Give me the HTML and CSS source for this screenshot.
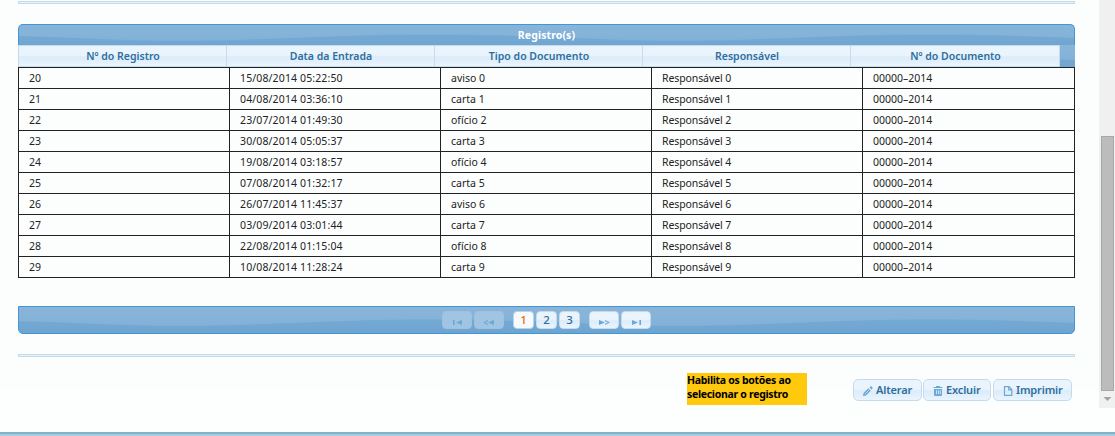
FILE: index.html
```
<!DOCTYPE html>
<html lang="pt-BR">
<head>
<meta charset="utf-8">
<title>Registros</title>
<link rel="stylesheet" href="styles.css">
</head>
<body>
<div class="viewport">
  <main class="content">
    <div class="separator"></div>
    <section class="grid">
      <div class="grid-title gloss"><span>Registro(s)</span></div>
      <div class="grid-head gloss">
        <div class="head-cell"><span>Nº do Registro</span></div>
        <div class="head-cell"><span>Data da Entrada</span></div>
        <div class="head-cell"><span>Tipo do Documento</span></div>
        <div class="head-cell"><span>Responsável</span></div>
        <div class="head-cell"><span>Nº do Documento</span></div>
      </div>
      <table class="grid-body">
        <colgroup><col class="col"><col class="col"><col class="col"><col class="col"><col></colgroup>
        <tbody>
          <tr><td>20</td><td class="date">15/08/2014 05:22:50</td><td>aviso 0</td><td class="name">Responsável 0</td><td>00000–2014</td></tr>
          <tr><td>21</td><td class="date">04/08/2014 03:36:10</td><td>carta 1</td><td class="name">Responsável 1</td><td>00000–2014</td></tr>
          <tr><td>22</td><td class="date">23/07/2014 01:49:30</td><td>ofício 2</td><td class="name">Responsável 2</td><td>00000–2014</td></tr>
          <tr><td>23</td><td class="date">30/08/2014 05:05:37</td><td>carta 3</td><td class="name">Responsável 3</td><td>00000–2014</td></tr>
          <tr><td>24</td><td class="date">19/08/2014 03:18:57</td><td>ofício 4</td><td class="name">Responsável 4</td><td>00000–2014</td></tr>
          <tr><td>25</td><td class="date">07/08/2014 01:32:17</td><td>carta 5</td><td class="name">Responsável 5</td><td>00000–2014</td></tr>
          <tr><td>26</td><td class="date">26/07/2014 11:45:37</td><td>aviso 6</td><td class="name">Responsável 6</td><td>00000–2014</td></tr>
          <tr><td>27</td><td class="date">03/09/2014 03:01:44</td><td>carta 7</td><td class="name">Responsável 7</td><td>00000–2014</td></tr>
          <tr><td>28</td><td class="date">22/08/2014 01:15:04</td><td>ofício 8</td><td class="name">Responsável 8</td><td>00000–2014</td></tr>
          <tr><td>29</td><td class="date">10/08/2014 11:28:24</td><td>carta 9</td><td class="name">Responsável 9</td><td>00000–2014</td></tr>
        </tbody>
      </table>
    </section>
    <nav class="pager gloss">
      <a class="page-btn nav-btn disabled"><svg width="28" height="16" viewBox="0 0 28 16"><path d="M10 8h1.600v5H10zM19 8v5l-6-2.500z"/></svg></a>
      <a class="page-btn nav-btn disabled"><svg width="28" height="16" viewBox="0 0 28 16"><path d="M19 8v5l-6-2.500zM13 8v1.300L10 10.500l3 1.200V13l-5-2.500z"/></svg></a>
      <span class="pages">
        <a class="page-btn active">1</a>
        <a class="page-btn">2</a>
        <a class="page-btn">3</a>
      </span>
      <a class="page-btn nav-btn"><svg width="28" height="16" viewBox="0 0 28 16"><path d="M9 8v5l6-2.500zM15 8l5 2.500-5 2.500v-1.300l3-1.200-3-1.200z"/></svg></a>
      <a class="page-btn nav-btn"><svg width="28" height="16" viewBox="0 0 28 16"><path d="M10 8v5l6-2.500zM17.400 8H19v5h-1.600z"/></svg></a>
    </nav>
    <div class="separator"></div>
    <footer class="actions">
      <p class="note">Habilita os botões ao<br>selecionar o registro</p>
      <div class="buttons">
        <button class="btn alter"><svg width="10" height="10" viewBox="0 0 10 10"><path d="M0 10l.6-3L5.300 2.300l2.400 2.400L3 9.400z"/><path d="M2 8l4-4" stroke="#e4f0fb" stroke-width=".7"/><path d="M6.500 1.600L8 .1 9.900 2 8.400 3.500z"/></svg><span>Alterar</span></button>
        <button class="btn exclude"><svg width="10" height="10" viewBox="0 0 10 10"><path d="M3 0h4v1h2.500v1h-9V1H3z"/><path d="M1 3h8v6.200l-.8.8H1.800L1 9.200z"/><path d="M3.500 4.200v4M5.500 4.200v4M7.300 4.200v4" stroke="#e7f2fc" stroke-width=".8"/></svg><span>Excluir</span></button>
        <button class="btn print"><svg width="10" height="10" viewBox="0 0 10 10"><path d="M1.500.700h4.500l2.800 2.800v5.800H1.500zM5.700.700v3.100h3.100" fill="none" stroke="#6da8d5" stroke-width="1.200"/></svg><span>Imprimir</span></button>
      </div>
    </footer>
  </main>
  <aside class="scrollbar">
    <div class="thumb"></div>
    <svg class="arrow" width="16" height="17" viewBox="0 0 16 17"><path d="M4.500 6h8L8.500 10z" fill="#a3a3a3"/></svg>
  </aside>
</div>
<div class="bottom-edge"></div>
</body>
</html>
```
FILE: styles.css
```
* { box-sizing: border-box; }
body {
  margin: 0;
  height: 436px;
  overflow: hidden;
  background: linear-gradient(#fcfefe 0 390px, #fdffff 390px);
  font-family: "Noto Sans", "Open Sans", sans-serif;
  font-size: 10.500px;
  color: #222;
}
.viewport { display: flex; justify-content: space-between; height: 432px; }
.content { width: 1057px; margin-left: 18px; padding-top: 1px; }
.separator {
  height: 3px;
  background: #e5f1fb;
  border: 1px solid #c5dbec;
}
.gloss {
  background-color: #85b2d7;
  background-repeat: repeat-x;
  background-image: url("data:image/svg+xml,%3Csvg xmlns='http://www.w3.org/2000/svg' width='500' height='100'%3E%3Cdefs%3E%3ClinearGradient id='g' x1='0' y1='46' x2='0' y2='64' gradientUnits='userSpaceOnUse'%3E%3Cstop stop-color='%2375aad3'/%3E%3Cstop offset='1' stop-color='%236da4d0'/%3E%3C/linearGradient%3E%3ClinearGradient id='h' x1='0' y1='36' x2='0' y2='56' gradientUnits='userSpaceOnUse'%3E%3Cstop stop-color='%238ab5d9'/%3E%3Cstop offset='1' stop-color='%2381b1d8'/%3E%3C/linearGradient%3E%3C/defs%3E%3Cpath fill='url(%23h)' d='M0 0h500v100H0z'/%3E%3Cpath fill='url(%23g)' d='M0 50C70 52 100 54.800 160 54.800C250 54.800 310 48.500 410 48.500C450 48.500 475 49 500 50V100H0z'/%3E%3C/svg%3E");
}
.grid { margin-top: 20px; }
.grid-title {
  height: 21px;
  border: 1px solid #4297d7;
  border-bottom: 0;
  border-radius: 5px 5px 0 0;
  background-position: 0 -39px;
  color: #fff;
  font-weight: 700;
  letter-spacing: .1px;
  text-align: center;
  line-height: 21px;
}
.grid-head { display: flex; height: 22px; background-position: 0 -37px; }
.head-cell {
  width: 208px;
  border: 1px solid #c5dbec;
  border-right: 0;
  background: linear-gradient(#eaf4fd 0 45%, #dcecfa 55%, #e9f4fe);
  color: #2e6e9e;
  font-weight: 600;
  font-size: 10.500px;
  line-height: 20px;
  text-align: center;
  padding-left: 1px;
}
.head-cell:last-child { width: 210px; border-right: 1px solid #c5dbec; }
.grid-body {
  width: 1057px;
  table-layout: fixed;
  border-collapse: collapse;
}
.col { width: 211px; }
.grid-body td {
  height: 21px;
  padding: 0 10px;
  border: 1px solid #222;
  line-height: 20px;
}
.grid-body .date { letter-spacing: .13px; }
.grid-body .name { letter-spacing: -.1px; }
.pager {
  display: flex;
  justify-content: center;
  align-items: center;
  gap: 2px;
  height: 28px;
  margin: 28px 0 20px;
  border: 1px solid #4297d7;
  border-radius: 0 0 5px 5px;
  background-position: 0 -36px;
}
.pages { display: flex; gap: 2px; margin: 0 7px; }
.page-btn {
  display: block;
  width: 21px;
  height: 18px;
  border: 1px solid #c5dbec;
  border-radius: 4px;
  background: linear-gradient(#eaf4fd 0 45%, #dcecfa 55%, #e9f4fe);
  color: #2e6e9e;
  font-size: 11.500px;
  font-weight: 500;
  line-height: 16px;
  text-align: center;
}
.page-btn svg { display: block; fill: #6da8d5; }
.nav-btn { width: 30px; }
.disabled { background: #a0c4e2; border-color: #9dc1df; }
.active { background: #f8fafb; border-color: #b5d5ee; color: #e17009; }
.actions { display: flex; justify-content: flex-end; padding: 16px 3px 0 0; }
.note {
  width: 120px;
  height: 32px;
  margin: 0 46px 0 0;
  background: #ffc90e;
  color: #000;
  font-weight: 700;
  letter-spacing: -.3px;
  line-height: 14px;
  white-space: nowrap;
}
.buttons { display: flex; margin-top: 6px; }
.btn {
  display: flex;
  align-items: center;
  gap: 3px;
  height: 22px;
  padding: 0 0 1px 9px;
  border: 1px solid #c5dbec;
  border-radius: 5px;
  background: linear-gradient(#eaf4fd 0 45%, #dcecfa 55%, #e9f4fe);
  color: #2e6e9e;
  font: 600 11px "Noto Sans", sans-serif;
  letter-spacing: -.15px;
}
.btn svg { fill: #6da8d5; flex: none; position: relative; top: 1px; }
.alter { width: 69px; margin-right: 1px; }
.exclude { width: 68px; margin-right: 2px; }
.print { width: 79px; }
.scrollbar {
  display: flex;
  flex-direction: column;
  width: 16px;
  height: 408px;
  padding-top: 136px;
  background: #f0f0f0;
}
.thumb {
  height: 255px;
  margin: 0 1px 0 2px;
  background: #bcbcbc;
  border: 1px solid #a8a8a8;
}
.bottom-edge {
  height: 4px;
  background: linear-gradient(#81b1cc 0 2px, #abcbdc 2px);
}
```
